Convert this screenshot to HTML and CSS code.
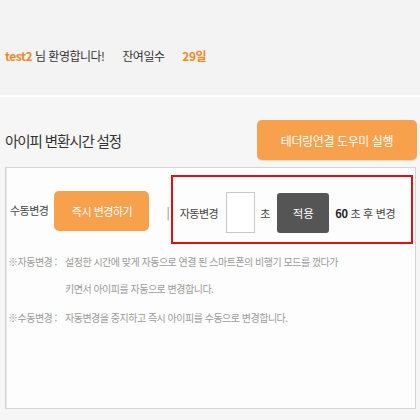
FILE: index.html
```html
<!DOCTYPE html>
<html lang="ko">
<head>
    <meta charset="UTF-8">
    <meta name="viewport" content="width=device-width, initial-scale=1.0">
    <title>아이피 변환시간 설정</title>
    <link rel="stylesheet" href="styles.css">
</head>

<body>
    <header class="top">
        <p class="welcome">
            <b class="hl">test2</b> 님 환영합니다!
            <span class="remain">잔여일수</span>
            <b class="hl days">29일</b>
        </p>
    </header>

    <main class="main">
        <div class="title-row">
            <h2>아이피 변환시간 설정</h2>
            <button class="btn btn-orange btn-tether">테더링연결 도우미 실행</button>
        </div>

        <div class="panel">
            <div class="controls">
                <span class="label">수동변경</span>
                <button class="btn btn-orange btn-now">즉시 변경하기</button>
                <span class="divider">|</span>
                <div class="auto-box">
                    <span class="label">자동변경</span>
                    <input type="text" class="sec-input">
                    <span class="unit">초</span>
                    <button class="btn btn-dark">적용</button>
                    <span class="count"><b>60</b> 초 후 변경</span>
                </div>
            </div>

            <div class="notes">
                <div class="note">
                    <span class="note-key">※자동변경 :</span>
                    <span class="note-text">설정한 시간에 맞게 자동으로 연결 된 스마트폰의 비행기 모드를 껐다가<br>키면서 아이피를 자동으로 변경합니다.</span>
                </div>
                <div class="note">
                    <span class="note-key">※수동변경 :</span>
                    <span class="note-text">자동변경을 중지하고 즉시 아이피를 수동으로 변경합니다.</span>
                </div>
            </div>
        </div>
    </main>
</body>
</html>
```

FILE: styles.css
```css
body {
    margin: 0;
    background: #f6f6f6;
    font-family: "Noto Sans CJK KR", "Noto Sans", sans-serif;
    color: #333;
}
.top {
    height: 97px;
    box-sizing: border-box;
    padding: 47px 0 0 5px;
    background: #f3f3f3;
    border-bottom: 2px solid #fff;
}
.welcome {
    margin: 0;
    font-size: 12px;
    line-height: 18px;
    letter-spacing: -0.5px;
    white-space: nowrap;
}
.hl {
    color: #f0892a;
}
.remain {
    margin-left: 15px;
}
.days {
    margin-left: 15px;
}
.main {
    padding: 0 3px 0 5px;
}
.title-row {
    display: flex;
    justify-content: space-between;
    align-items: center;
    margin-top: 23px;
}
h2 {
    margin: 0;
    font-size: 14.5px;
    font-weight: normal;
    letter-spacing: -1.1px;
    color: #333;
}
.btn {
    border: none;
    font-family: inherit;
    color: #fff;
    cursor: pointer;
    padding: 0;
}
.btn-orange {
    background: #f8a14d;
    border-radius: 5px;
}
.btn-tether {
    width: 160px;
    height: 40px;
    font-size: 12px;
    letter-spacing: -0.4px;
    box-shadow: 0 1px 1px #e0dcd8;
}
.panel {
    height: 242px;
    box-sizing: border-box;
    margin-top: 7px;
    margin-right: 1px;
    padding: 7px 2px 0 4px;
    background: #fdfdfd;
    border: 1px solid #d4d4d4;
    box-shadow: inset 1px 0 0 #e6e6e6;
}
.controls {
    display: flex;
    align-items: center;
}
.label {
    font-size: 11px;
    letter-spacing: -0.5px;
    color: #444;
}
.btn-now {
    width: 95px;
    height: 40px;
    margin: 3px 0 0 6px;
    font-size: 11px;
    letter-spacing: -0.5px;
}
.divider {
    margin: 3px 0 0 17px;
    font-size: 12px;
    color: #888;
}
.auto-box {
    flex: 1;
    display: flex;
    align-items: center;
    height: 69px;
    box-sizing: border-box;
    margin-left: 1px;
    padding: 6px 0 0 7px;
    border: 2px solid #e01010;
}
.sec-input {
    width: 29px;
    height: 41px;
    box-sizing: border-box;
    margin-left: 8px;
    border: 1px solid #c8c8c8;
    background: #fff;
}
.unit {
    margin-left: 5px;
    font-size: 11px;
    color: #444;
}
.btn-dark {
    width: 52px;
    height: 40px;
    margin-left: 7px;
    background: #555;
    border-radius: 3px;
    font-size: 11.5px;
}
.count {
    margin-left: 6px;
    font-size: 11px;
    letter-spacing: -0.3px;
    color: #444;
    white-space: nowrap;
}
.count b {
    color: #222;
}
.notes {
    margin-top: 4px;
    margin-left: -2px;
    font-size: 10px;
    line-height: 27px;
    letter-spacing: -0.5px;
    color: #9a9a9a;
}
.note {
    display: flex;
    margin-bottom: 2px;
}
.note-key {
    flex: none;
    width: 57px;
}
.note-text {
    word-break: keep-all;
}
```
